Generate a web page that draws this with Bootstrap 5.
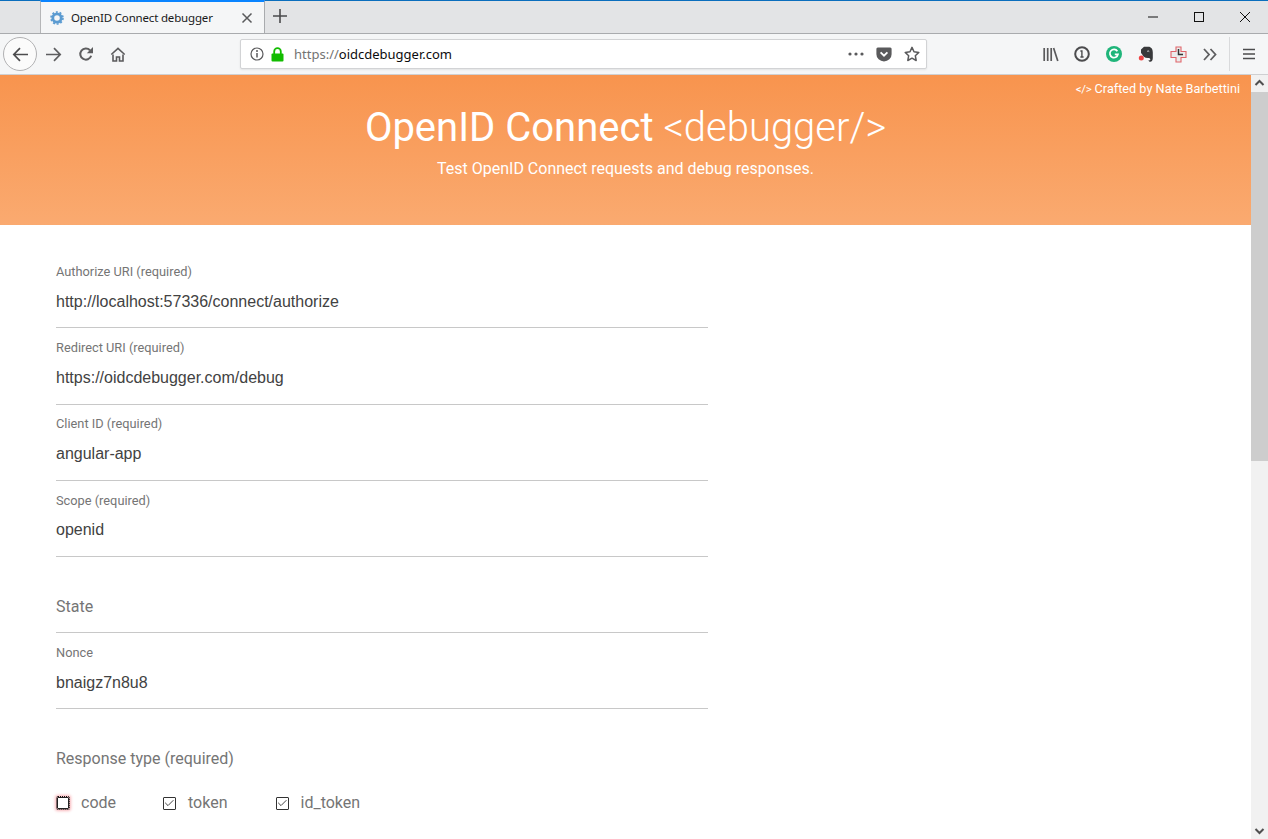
<!DOCTYPE html>
<html lang="en"><head><meta charset="utf-8"><title>OpenID Connect debugger</title>
<link href="https://cdn.jsdelivr.net/npm/bootstrap@5.3.0/dist/css/bootstrap.min.css" rel="stylesheet">
<style>
html,body{height:839px;overflow:hidden;background:#fff}
body{font-family:Roboto,sans-serif}
.win-top{height:34px;background:#e3e4e6;border-top:1px solid #0a6ebd;border-bottom:1px solid #a9abae}
.tab-on{width:225px;margin-left:40px;height:33px;margin-top:-1px;margin-bottom:-1px;background:#f5f6f7;border-top:2px solid #0a84ff;border-left:1px solid #b5b6b8;border-right:1px solid #a9abae;padding:0 10px 0 9px;font:11.5px "Noto Sans",sans-serif;letter-spacing:-.17px;color:#18191a;position:relative;z-index:1}
.tab-title{margin-left:7px;flex:1}
.tab-close{margin-right:1px}
.win-ctl{margin-left:auto;width:138px}
.win-ctl svg{display:block}
.tool-bar{height:41px;background:#f5f6f7;border-bottom:1px solid #cfd0d2;position:relative;padding-left:3px}
.back-btn{width:34px;height:34px;border:1px solid #b1b1b3;border-radius:50%;background:#fbfbfb}
.url-bar{width:687px;height:30px;margin-left:114px;background:#fff;border:1px solid #d2d3d5;border-radius:2px;box-shadow:0 1px 2px rgba(0,0,0,.08);font:13px "Noto Sans",sans-serif;color:#0c0c0d}
.url-dim{color:#737373}
.url-info{margin-left:9px}
.url-lock{margin-left:7px}
.url-text{margin-left:10px}
.url-gap{margin-left:12px}
.url-last{margin-right:6px}
.lib-icon{margin-left:116px}
.page-wrap{height:764px}
.page-main{flex:1;min-width:0;overflow:hidden}
.scroll-col{width:17px;background:#f1f1f1;position:relative}
.scroll-thumb{height:369px;background:#cdcdcd;margin-top:17px}
.scroll-up,.scroll-dn{position:absolute;left:0;width:17px;height:17px}
.scroll-up{top:0}.scroll-dn{bottom:0}
.hero-band{height:150px;background:linear-gradient(#f8944e,#faaa70);color:#fff;position:relative}
.credit{position:absolute;right:11px;top:4px;font-size:12.7px;color:#fff}
.credit-mark{font-size:11.5px;letter-spacing:-.3px}
.hero-title{font-size:40px;font-weight:400;margin:0;padding-top:29px;line-height:47px;text-align:center}
.hero-title span{font-weight:300}
.hero-sub{font-size:16px;text-align:center;margin:8px 0 0;line-height:20px;font-weight:400;color:#fff}
.form-area{padding:27.25px 0 0 56px;width:708px;color:#757575}
.fld{height:76.15px;border-bottom:1px solid #c8c8c8;position:relative}
.fld-label{display:block;font-size:12.8px;line-height:16px;margin:0;padding-top:11.85px;color:#757575}
.form-control.fld-value{font:16px "Liberation Sans",sans-serif;color:#424242;border:0;padding:0;background:none;border-radius:0;margin-top:11.85px;line-height:20px}
.fld-empty{font-size:16px;line-height:20px;padding-top:40.45px;color:#757575}
.resp-head{font-size:16px;line-height:20px;margin-top:40.05px;color:#757575}
.resp-opts{margin-top:24px;font-size:16px;line-height:20px;color:#757575}
.resp-item{display:flex;align-items:center}
.form-check-input.box{width:13px;height:13px;margin:0 12px 0 0;border:1px solid #333;border-radius:1px;background-color:#fff;flex:none;opacity:1}
.form-check-input.box:checked{background-color:#fff;border-color:#333;background-image:url("data:image/svg+xml,%3Csvg xmlns='http://www.w3.org/2000/svg' viewBox='0 0 13 13'%3E%3Cpath d='M2.200 5.800l2.800 2.800 5.400-5.400' fill='none' stroke='%23444' stroke-width='1'/%3E%3C/svg%3E");background-size:13px 13px}
.form-check-input.box-err{width:12px;height:12px;margin:0 12px 0 1px;border-color:#222;outline:1px dotted #111;outline-offset:0;box-shadow:0 0 3px 2px #f9b9bd}
.gap-a{width:47px}.gap-b{width:48px}
</style></head>
<body>
<div class="win-top d-flex align-items-start">
<div class="tab-on d-flex align-items-center">
<svg width="14" height="14" viewBox="0 0 14 14"><circle cx="7" cy="7" r="4.200" fill="none" stroke="#5b9bd1" stroke-width="2.800"/><circle cx="7" cy="7" r="6" fill="none" stroke="#5b9bd1" stroke-width="1.600" stroke-dasharray="2 1.770"/></svg>
<span class="tab-title">OpenID Connect debugger</span>
<svg class="tab-close" width="12" height="12" viewBox="0 0 12 12"><path d="M1.500 1.500l9 9M10.500 1.500l-9 9" stroke="#5a5a5c" stroke-width="1.500"/></svg>
</div>
<svg class="ms-2 mt-2" width="14" height="14" viewBox="0 0 14 14"><path d="M7 0v14M0 7h14" stroke="#4a4a4c" stroke-width="1.600"/></svg>
<div class="win-ctl d-flex">
<svg class="mt-2" width="46" height="16" viewBox="0 0 46 16"><path d="M18 8h10" stroke="#111"/></svg>
<svg class="mt-2" width="46" height="16" viewBox="0 0 46 16"><rect x="18.500" y="3.500" width="9" height="9" fill="none" stroke="#111"/></svg>
<svg class="mt-2" width="46" height="16" viewBox="0 0 46 16"><path d="M18 3l10 10M28 3L18 13" stroke="#111"/></svg>
</div>
</div>
<div class="tool-bar d-flex align-items-center">
<div class="back-btn d-flex align-items-center justify-content-center"><svg width="17" height="15" viewBox="0 0 17 15"><path d="M16 7.500H2M8 1.200L1.800 7.500 8 13.800" fill="none" stroke="#4c4c4e" stroke-width="1.700"/></svg></div>
<svg class="ms-2" width="17" height="15" viewBox="0 0 17 15"><path d="M1 7.500h14M9 1.200l6.200 6.300L9 13.800" fill="none" stroke="#5e5e60" stroke-width="1.700"/></svg>
<svg class="ms-3" width="16" height="16" viewBox="0 0 16 16"><path d="M13.200 9.800A5.600 5.600 0 1 1 12 4.200" fill="none" stroke="#5e5e60" stroke-width="2"/><path d="M15 1v6.200H8.800z" fill="#5e5e60"/></svg>
<svg class="ms-3" width="16" height="16" viewBox="0 0 16 16"><path d="M8 1.200L.8 8l1 1.100L8 3.400l6.200 5.700 1-1.100z" fill="#5a5a5c"/><path d="M3 8.500V15h3.500v-4h3v4H13V8.500" fill="none" stroke="#5a5a5c" stroke-width="1.600"/></svg>
<div class="url-bar d-flex align-items-center">
<svg class="url-info" width="14" height="14" viewBox="0 0 14 14"><circle cx="7" cy="7" r="6" fill="none" stroke="#5a5a5c" stroke-width="1.200"/><path d="M7 6v4.400" stroke="#5a5a5c" stroke-width="1.500"/><circle cx="7" cy="4" r="1" fill="#5a5a5c"/></svg>
<svg class="url-lock" width="13" height="15" viewBox="0 0 13 15"><path d="M3.200 7V4.500a3.300 3.300 0 0 1 6.600 0V7" fill="none" stroke="#12bc00" stroke-width="1.800"/><rect x="0.500" y="6.500" width="12" height="8" rx="1" fill="#12bc00"/></svg>
<span class="url-text"><span class="url-dim">https://</span>oidcdebugger.com</span>
<svg class="ms-auto" width="16" height="4" viewBox="0 0 16 4"><circle cx="2" cy="2" r="1.600" fill="#5a5a5c"/><circle cx="8" cy="2" r="1.600" fill="#5a5a5c"/><circle cx="14" cy="2" r="1.600" fill="#5a5a5c"/></svg>
<svg class="url-gap" width="16" height="15" viewBox="0 0 16 15"><path d="M1.800.5h12.400A1.400 1.400 0 0 1 15.600 2v5.200a7.600 7.300 0 0 1-15.200 0V2A1.400 1.400 0 0 1 1.800.5z" fill="#5a5a5c"/><path d="M4.600 5.400L8 8.600l3.400-3.200" fill="none" stroke="#fff" stroke-width="1.900"/></svg>
<svg class="url-gap url-last" width="16" height="16" viewBox="0 0 16 16"><path d="M8 1.400l2 4.400 4.800.6-3.500 3.300.9 4.800L8 12.200l-4.200 2.300.9-4.800L1.200 6.400 6 5.800z" fill="none" stroke="#5a5a5c" stroke-width="1.500" stroke-linejoin="round"/></svg>
</div>
<svg class="lib-icon" width="16" height="15" viewBox="0 0 16 15"><path d="M1.200 1v13M4.700 1v13M8.200 1v13M10.600 1l4.200 13" stroke="#5a5a5c" stroke-width="1.700" fill="none"/></svg>
<svg style="margin-left:15px" width="16" height="16" viewBox="0 0 16 16"><circle cx="8" cy="8" r="6.800" fill="none" stroke="#4c4c4e" stroke-width="2"/><path d="M6.400 4.200h2.200v6h1v1.600H6.400v-1.600h.8V5.800h-.8z" fill="#4c4c4e"/></svg>
<svg class="ms-3" width="16" height="16" viewBox="0 0 16 16"><circle cx="8" cy="8" r="8" fill="#1fb57a"/><path d="M11.400 5.200A4.100 4.100 0 1 0 12 8.400H8.800" fill="none" stroke="#fff" stroke-width="1.700"/></svg>
<svg class="ms-3" width="16" height="16" viewBox="0 0 16 16"><path d="M3 3.500L6 .8h4.500C13 .8 14.800 3 14.800 6.500V12c0 2.400-1 3.800-2.500 3.800-1.100 0-1.800-.8-1.700-1.900.4.600 1.700.5 1.700-.5 0-.9-1-1.300-2.300-1.300C6.500 12.100 4.500 10 3.800 7.500H3z" fill="#38393b"/><path d="M11.200 5.500c-.6-.6-1.500-.6-2 0" stroke="#f5f6f7" fill="none"/><circle cx="3.300" cy="12" r="2.500" fill="#ef4444"/></svg>
<svg class="ms-3" width="17" height="17" viewBox="0 0 17 17"><path d="M6 1h5v4.500h5v6h-5v4.500H6v-4.500H1v-6h5z" fill="#ebebeb" stroke="#e0656b" stroke-width="1.100"/><path d="M8.500 3v5.500H13" fill="none" stroke="#333" stroke-width="1.500"/></svg>
<svg class="ms-3" width="14" height="13" viewBox="0 0 14 13"><path d="M1 1l5 5.500-5 5.500M7.500 1l5 5.500-5 5.500" fill="none" stroke="#5e5e60" stroke-width="1.800"/></svg>
<span style="width:1px;height:34px;background:#d9dadc;margin-left:12px"></span>
<svg style="margin-left:13px" width="12" height="12" viewBox="0 0 12 12"><path d="M0 1.500h12M0 6h12M0 10.500h12" stroke="#4c4c4e" stroke-width="1.600"/></svg>
</div>
<div class="page-wrap d-flex">
<main class="page-main">
<header class="hero-band">
<div class="credit"><span class="credit-mark">&lt;/&gt;</span> Crafted by Nate Barbettini</div>
<h1 class="hero-title">OpenID Connect <span>&lt;debugger/&gt;</span></h1>
<p class="hero-sub">Test OpenID Connect requests and debug responses.</p>
</header>
<form class="form-area">
<div class="fld"><label class="fld-label">Authorize URI (required)</label><div class="form-control fld-value">http://localhost:57336/connect/authorize</div></div>
<div class="fld"><label class="fld-label">Redirect URI (required)</label><div class="form-control fld-value">https://oidcdebugger.com/debug</div></div>
<div class="fld"><label class="fld-label">Client ID (required)</label><div class="form-control fld-value">angular-app</div></div>
<div class="fld"><label class="fld-label">Scope (required)</label><div class="form-control fld-value">openid</div></div>
<div class="fld"><div class="fld-empty">State</div></div>
<div class="fld"><label class="fld-label">Nonce</label><div class="form-control fld-value">bnaigz7n8u8</div></div>
<div class="resp-head">Response type (required)</div>
<div class="resp-opts d-flex">
<label class="resp-item"><input class="form-check-input box box-err" type="checkbox">code</label>
<span class="gap-a"></span>
<label class="resp-item"><input class="form-check-input box" type="checkbox" checked>token</label>
<span class="gap-b"></span>
<label class="resp-item"><input class="form-check-input box" type="checkbox" checked>id_token</label>
</div>
</form>
</main>
<div class="scroll-col">
<svg class="scroll-up" viewBox="0 0 17 17"><path d="M4.500 10l4-4 4 4" fill="none" stroke="#505050" stroke-width="2"/></svg>
<div class="scroll-thumb"></div>
<svg class="scroll-dn" viewBox="0 0 17 17"><path d="M4.500 7l4 4 4-4" fill="none" stroke="#505050" stroke-width="2"/></svg>
</div>
</div>
<script src="https://cdn.jsdelivr.net/npm/bootstrap@5.3.0/dist/js/bootstrap.bundle.min.js"></script>
</body></html>
